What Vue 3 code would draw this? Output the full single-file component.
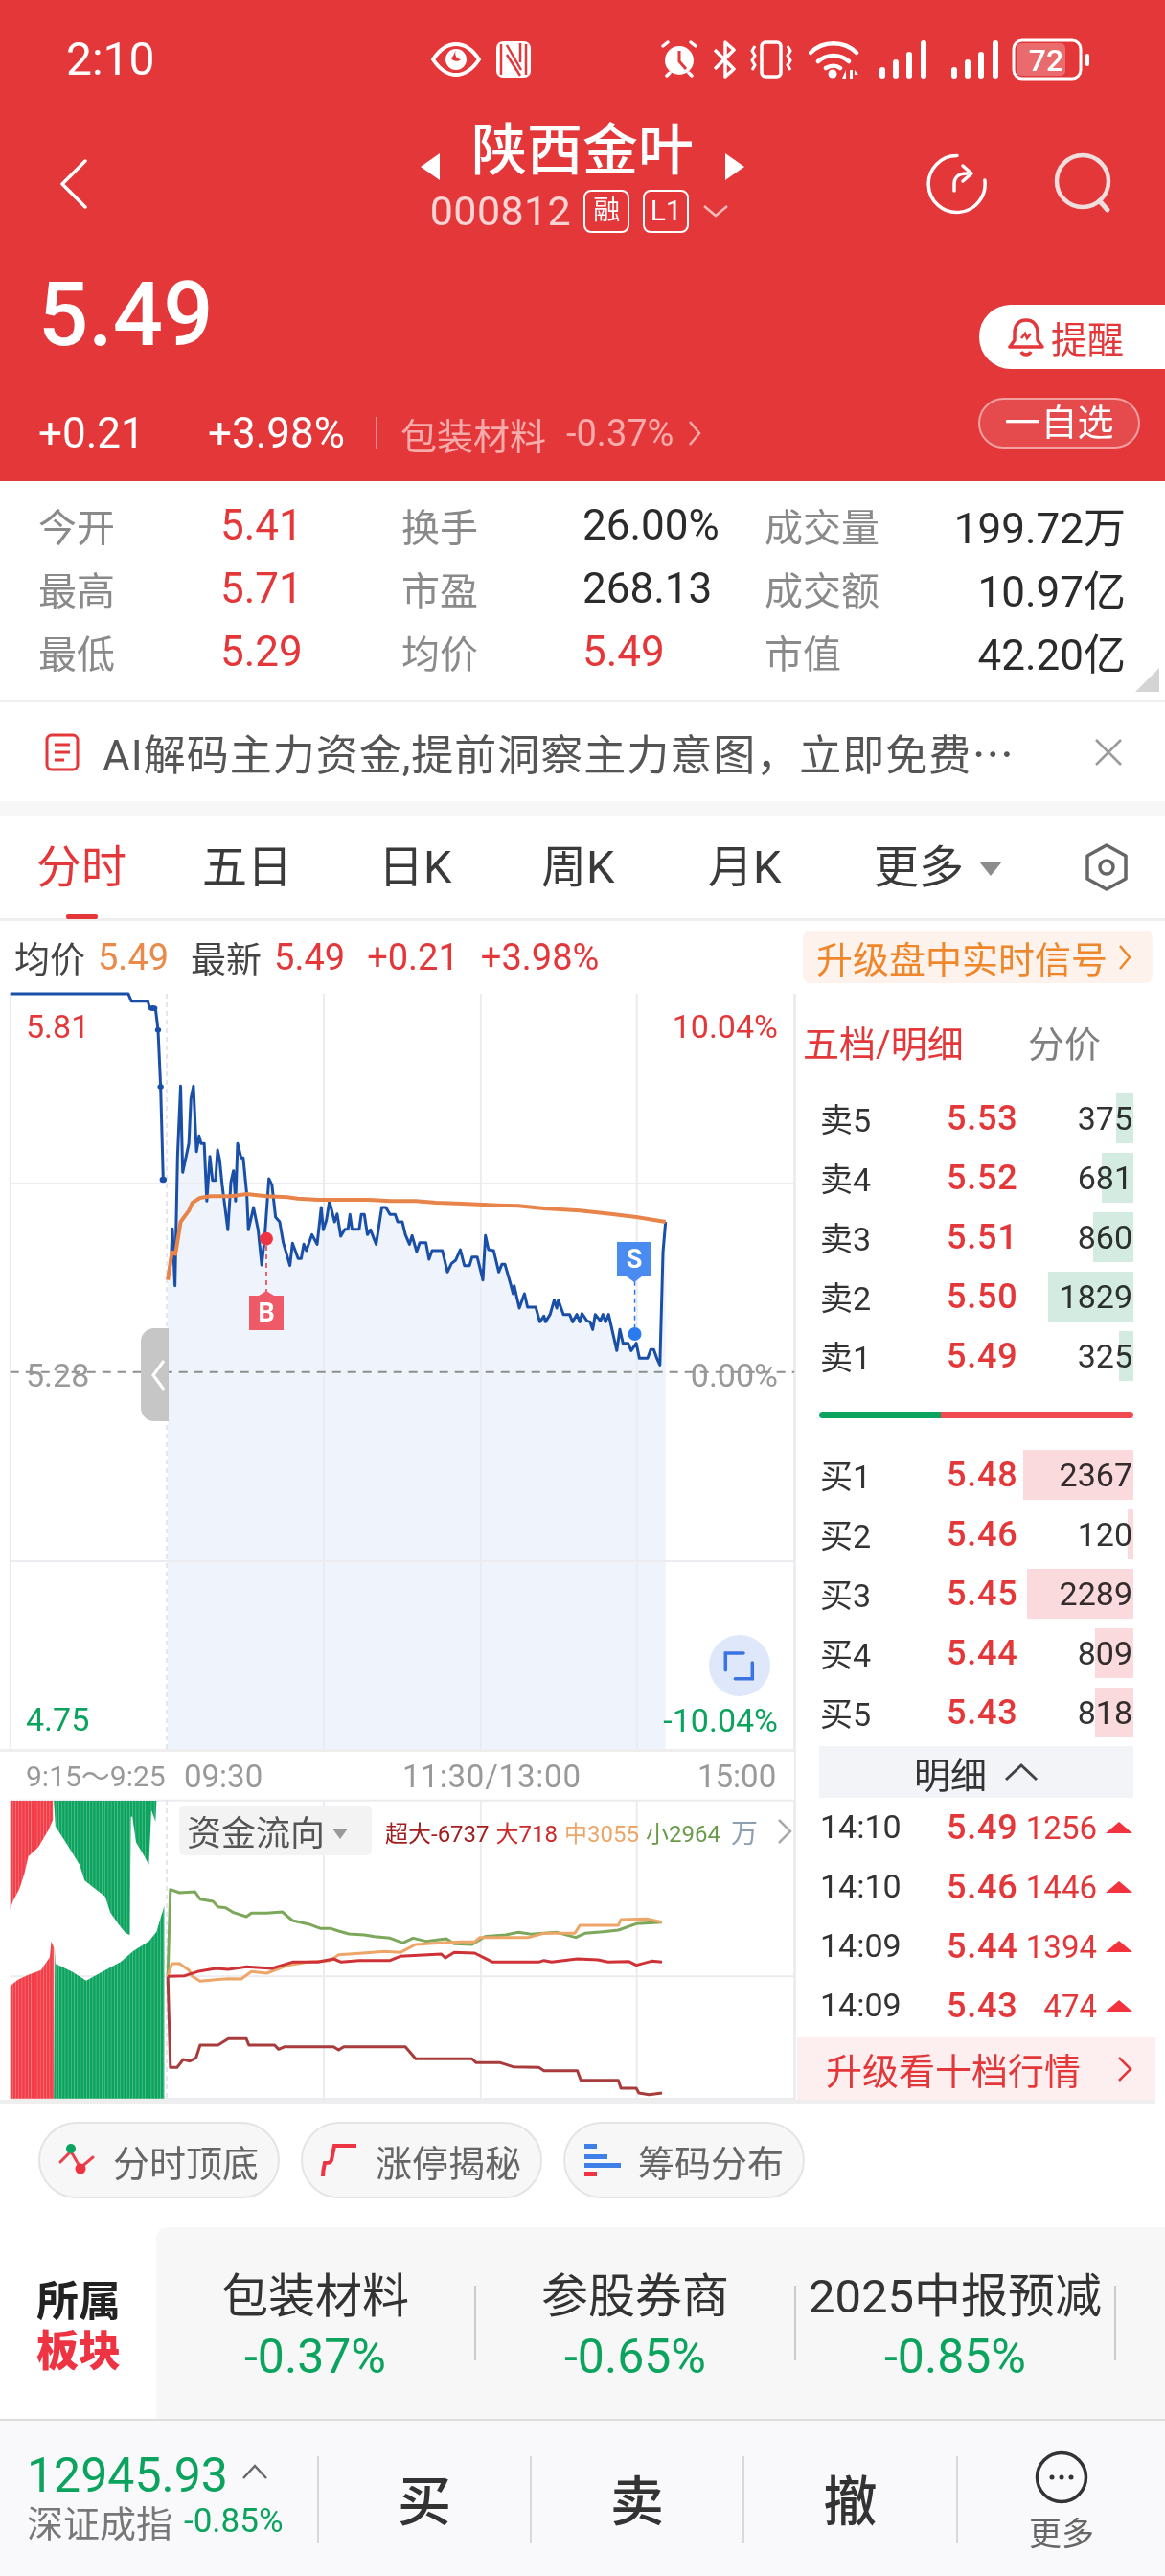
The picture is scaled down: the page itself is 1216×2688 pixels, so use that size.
<script setup>
const stats = [
  ['今开', '5.41', true, '换手', '26.00%', false, '成交量', '199.72万'],
  ['最高', '5.71', true, '市盈', '268.13', false, '成交额', '10.97亿'],
  ['最低', '5.29', true, '均价', '5.49', true, '市值', '42.20亿'],
]
const tabs = ['分时', '五日', '日K', '周K', '月K']
const sells = [
  ['卖5', '5.53', 375, 18],
  ['卖4', '5.52', 681, 33],
  ['卖3', '5.51', 860, 42],
  ['卖2', '5.50', 1829, 89],
  ['卖1', '5.49', 325, 15],
]
const buys = [
  ['买1', '5.48', 2367, 115],
  ['买2', '5.46', 120, 6],
  ['买3', '5.45', 2289, 111],
  ['买4', '5.44', 809, 40],
  ['买5', '5.43', 818, 40],
]
const details = [
  ['14:10', '5.49', 1256],
  ['14:10', '5.46', 1446],
  ['14:09', '5.44', 1394],
  ['14:09', '5.43', 474],
]
const plates = [
  ['包装材料', '-0.37%'],
  ['参股券商', '-0.65%'],
  ['2025中报预减', '-0.85%'],
]

// traced from the reference, coordinates are in the svg viewBox
const preLine = '20,-9 250,-9 256,14 288,14 292,36 303,36 308,104 313,282 318,573'
const priceLine = '334,800 336,727 341,905 346,500 352,280 356,550 368,460 372,320 377,280 383,485 388,436 392,460 398,460 403,640 409,500 414,575 420,575 424,480 428,510 433,590 444,730 450,580 455,545 459,640 463,460 470,505 474,505 481,620 484,730 494,660 503,730 510,840 516,750 524,570 530,590 537,690 545,705 552,770 565,842 570,772 581,820 587,820 592,775 597,795 608,745 618,775 626,660 630,730 636,700 642,640 652,705 657,680 664,750 672,728 678,728 682,682 686,728 700,728 704,682 710,682 716,745 722,730 733,775 744,660 752,660 760,682 770,682 775,705 784,705 790,745 798,775 803,748 812,798 818,770 830,770 836,822 842,795 862,795 872,862 880,835 888,825 897,792 905,842 915,842 920,815 930,815 941,887 946,748 952,792 962,795 972,862 978,838 984,838 995,900 1000,930 1002,905 1012,975 1022,930 1028,972 1044,972 1052,1018 1060,1000 1063,1018 1072,995 1080,950 1085,975 1088,950 1098,995 1110,995 1116,1018 1124,995 1130,1018 1134,992 1144,1015 1150,1018 1155,1042 1160,995 1170,1015 1175,995 1180,1018 1186,995 1202,1108 1208,1042 1214,1085 1224,1085 1230,1108 1240,1085 1246,1132 1262,1132 1268,1105 1274,1105 1280,1132 1286,1153 1292,800 1297,705'
const avgLine = '327,887 335,800 342,805 352,705 368,670 375,645 390,630 410,625 450,625 480,618 520,625 560,628 580,632 620,636 720,636 760,640 810,640 850,645 900,648 970,653 1010,655 1060,663 1130,670 1190,680 1240,690 1297,705'
const areaFill = '327,2355 327,887 ' + priceLine + ' 1297,2355'

const flowGreen = '327,790 332,518 350,528 380,525 390,548 415,555 425,572 440,575 455,590 480,603 490,592 520,592 550,588 570,615 605,628 625,640 645,640 660,648 680,657 710,660 730,665 760,670 785,685 805,670 830,680 870,672 885,688 920,690 945,665 985,660 1010,652 1035,658 1085,652 1122,668 1140,655 1175,650 1205,645 1240,625 1290,620'
const flowOrange = '327,790 335,750 350,750 368,770 375,790 390,805 420,800 445,797 470,798 490,775 520,780 560,755 600,745 645,740 660,722 700,718 750,712 780,715 810,690 860,685 900,682 925,682 935,668 990,668 1030,668 1060,655 1120,655 1130,630 1205,630 1210,612 1260,610 1290,620'
const flowRed = '327,790 360,788 385,775 420,765 445,768 480,760 530,765 570,745 620,745 650,735 665,745 700,740 760,740 780,727 860,720 868,732 885,715 925,717 960,745 1050,745 1060,740 1075,745 1125,735 1165,738 1185,745 1225,743 1240,755 1270,742 1290,745'
const flowBrown = '327,790 332,1075 345,1075 357,1050 370,1055 382,1045 390,1005 425,1005 445,985 480,985 485,1005 535,1005 543,1018 555,1010 650,1010 660,1020 670,1010 790,1010 810,1048 920,1048 928,1060 975,1060 1000,1073 1050,1075 1060,1085 1125,1085 1132,1115 1205,1115 1210,1140 1240,1140 1245,1155 1265,1160 1290,1155'
</script>

<template>
  <div class="page">
    <header class="head">
      <div class="status">
        <span class="clock">2:10</span>
        <svg class="st-eye" width="52" height="36" viewBox="0 0 52 36">
          <path d="M2 18C10 6 18 2 26 2s16 4 24 16c-8 12-16 16-24 16S10 30 2 18z" fill="none" stroke="#fff" stroke-width="4" />
          <circle cx="26" cy="18" r="11" fill="#fff" />
          <path d="M26 8c-2 5 0 9 5 10-3 3-8 2-10-1 2-2 3-5 5-9z" fill="#e3373a" />
        </svg>
        <svg class="st-nfc" width="36" height="38" viewBox="0 0 36 38">
          <rect x="0" y="0" width="36" height="38" rx="7" fill="#fff" />
          <path d="M5 3v32M11 4l15 26M11 14l14 22M25 2v20M31 3v32" fill="none" stroke="#e3373a" stroke-width="2.5" />
        </svg>
        <svg class="st-alarm" width="42" height="40" viewBox="0 0 42 40">
          <circle cx="21" cy="21" r="15" fill="#fff" />
          <path d="M21 11v11l7 8" fill="none" stroke="#e3373a" stroke-width="3" />
          <path d="M4 6l5-4M38 6l-5-4M8 37l3-3M34 37l-3-3" stroke="#fff" stroke-width="3.5" stroke-linecap="round" />
        </svg>
        <svg class="st-bt" width="24" height="40" viewBox="0 0 24 40">
          <path d="M2 10l20 20-9 8V2l9 8L2 30" fill="none" stroke="#fff" stroke-width="3.5" stroke-linejoin="round" />
        </svg>
        <svg class="st-vib" width="46" height="40" viewBox="0 0 46 40">
          <rect x="13" y="2" width="20" height="36" rx="4" fill="none" stroke="#fff" stroke-width="3.5" />
          <path d="M6 6l-3 5 3 5-3 5 3 5-3 5M40 6l3 5-3 5 3 5-3 5 3 5" fill="none" stroke="#fff" stroke-width="3" />
        </svg>
        <svg class="st-wifi" width="54" height="40" viewBox="0 0 54 40">
          <path d="M2 13C15 0 37 0 50 13M10 22c9-8 23-8 32 0M18 29c5-3 11-3 15 0" fill="none" stroke="#fff" stroke-width="4.5" stroke-linecap="round" />
          <circle cx="25" cy="35" r="4.5" fill="#fff" />
          <path d="M35 40l4-9v9zM43 31h3v9h-3zM48 31l4 5h-4z" fill="#fff" />
        </svg>
        <svg class="st-sig" width="50" height="40" viewBox="0 0 50 40">
          <rect x="0" y="28" width="6" height="12" rx="3" fill="#fff" />
          <rect x="14" y="20" width="6" height="20" rx="3" fill="#fff" />
          <rect x="28" y="12" width="6" height="28" rx="3" fill="#fff" />
          <rect x="43" y="0" width="6" height="40" rx="3" fill="#fff" />
        </svg>
        <svg class="st-sig2" width="50" height="40" viewBox="0 0 50 40">
          <rect x="0" y="28" width="6" height="12" rx="3" fill="#fff" />
          <rect x="14" y="20" width="6" height="20" rx="3" fill="#fff" />
          <rect x="28" y="12" width="6" height="28" rx="3" fill="#fff" />
          <rect x="43" y="0" width="6" height="40" rx="3" fill="#fff" />
        </svg>
        <svg class="st-bat" width="82" height="44" viewBox="0 0 82 44">
          <rect x="5" y="5" width="51" height="34" rx="5" fill="#ea6b6d" />
          <rect x="2" y="2" width="70" height="40" rx="9" fill="none" stroke="#fff" stroke-width="3" />
          <rect x="77" y="16" width="4" height="13" rx="2" fill="#fff" />
          <text x="36" y="34" text-anchor="middle" class="bat-text">72</text>
        </svg>
      </div>

      <div class="nav">
        <svg class="back" width="30" height="52" viewBox="0 0 30 52">
          <path d="M27 2L3 26l24 24" fill="none" stroke="#fff" stroke-width="3.5" stroke-linecap="round" stroke-linejoin="round" />
        </svg>
        <div class="nav-mid">
          <div class="name-row">
            <i class="tri-l"></i>
            <span class="name">陕西金叶</span>
            <i class="tri-r"></i>
          </div>
          <div class="code-row">
            <span class="code">000812</span>
            <span class="code-tag t-rong">融</span>
            <span class="code-tag">L1</span>
            <svg width="28" height="14" viewBox="0 0 28 14">
              <path d="M2 2l12 10L26 2" fill="none" stroke="#f5b9b9" stroke-width="2.5" />
            </svg>
          </div>
        </div>
        <div class="nav-right">
          <svg width="66" height="66" viewBox="0 0 66 66">
            <path d="M34 3.5A29.5 29.5 0 1 0 62 30" fill="none" stroke="#fff" stroke-width="3.5" stroke-linecap="round" transform="rotate(-2 33 33)" />
            <path d="M30 40v-7c0-7 5-11 13-11M39 14l9 8-9 8" fill="none" stroke="#fff" stroke-width="3.5" stroke-linecap="round" stroke-linejoin="round" />
          </svg>
          <svg width="62" height="64" viewBox="0 0 62 64">
            <circle cx="30" cy="30" r="27" fill="none" stroke="#eedede" stroke-width="4.5" />
            <path d="M48 51l8 9" stroke="#eedede" stroke-width="5" stroke-linecap="round" />
          </svg>
        </div>
      </div>

      <div class="quote">
        <div class="quote-left">
          <div class="price">5.49</div>
          <div class="change">
            <span class="chg-a">+0.21</span>
            <span class="chg-b">+3.98%</span>
            <span class="chg-sep"></span>
            <span class="chg-sector">包装材料</span>
            <span class="chg-pct">-0.37%</span>
            <svg width="14" height="28" viewBox="0 0 14 28">
              <path d="M2 2l10 12L2 26" fill="none" stroke="#f7abab" stroke-width="2.5" />
            </svg>
          </div>
        </div>
        <div class="quote-right">
          <div class="alert">
            <svg width="38" height="42" viewBox="0 0 38 42">
              <path d="M19 3c-8 0-12 6-12 13v8l-5 7h34l-5-7v-8c0-7-4-13-12-13z" fill="none" stroke="#e3373a" stroke-width="3.5" stroke-linejoin="round" />
              <path d="M14 22l4-5 2 5 4-5" fill="none" stroke="#e3373a" stroke-width="2.5" />
              <path d="M14 36c2 4 8 4 10 0" fill="none" stroke="#e3373a" stroke-width="3.5" />
            </svg>
            <span>提醒</span>
          </div>
          <div class="watch">一自选</div>
        </div>
      </div>
    </header>

    <section class="stats">
      <template v-for="row in stats" :key="row[0]">
        <span class="s-label">{{ row[0] }}</span>
        <span class="s-val" :class="{ red: row[2] }">{{ row[1] }}</span>
        <span class="s-label">{{ row[3] }}</span>
        <span class="s-val" :class="{ red: row[5] }">{{ row[4] }}</span>
        <span class="s-label">{{ row[6] }}</span>
        <span class="s-val s-right">{{ row[7] }}</span>
      </template>
      <i class="corner"></i>
    </section>

    <section class="ad">
      <svg width="36" height="40" viewBox="0 0 36 40">
        <rect x="2" y="2" width="32" height="36" rx="5" fill="none" stroke="#e3373a" stroke-width="3" />
        <path d="M10 12h16M10 20h16M10 28h10" stroke="#e3373a" stroke-width="3" />
      </svg>
      <span class="ad-text">AI解码主力资金,提前洞察主力意图，立即免费⋯</span>
      <svg class="ad-x" width="30" height="30" viewBox="0 0 30 30">
        <path d="M2 2l26 26M28 2L2 28" stroke="#9a9a9a" stroke-width="2.5" />
      </svg>
    </section>

    <nav class="tabs">
      <span v-for="(t, i) in tabs" :key="t" class="tab" :class="{ active: i === 0 }">{{ t }}</span>
      <span class="tab tab-more">更多<i class="more-tri"></i></span>
      <svg width="48" height="52" viewBox="0 0 48 52">
        <path d="M24 3l20 11v24L24 49 4 38V14z" fill="none" stroke="#666" stroke-width="3.5" stroke-linejoin="round" />
        <circle cx="24" cy="26" r="7" fill="none" stroke="#666" stroke-width="3.5" />
      </svg>
    </nav>

    <section class="info">
      <span class="i-text">均价</span>
      <span class="i-num orange">5.49</span>
      <span class="i-text i-gap">最新</span>
      <span class="i-num red">5.49</span>
      <span class="i-num red i-gap">+0.21</span>
      <span class="i-num red i-gap">+3.98%</span>
      <span class="upgrade-btn">升级盘中实时信号<svg width="14" height="28" viewBox="0 0 14 28"><path d="M2 2l10 12L2 26" fill="none" stroke="#f0862a" stroke-width="2.5" /></svg></span>
    </section>

    <main class="market">
      <div class="left">
        <div class="plot">
          <svg class="plot-svg" width="830" height="789" viewBox="0 -12 1549.6 2367" preserveAspectRatio="none">
            <polygon :points="areaFill" fill="#eef3fc" />
            <g class="grid">
              <path d="M20 -9V2355M631 -9V2355M937 -9V2355M1241 -9V2355M1548 -9V2355M20 585H1548M20 1767H1548" />
            </g>
            <path class="open-line" d="M325 -9V2355" />
            <path class="base-line" d="M20 1175H1548" />
            <polyline class="line-pre" :points="preLine" />
            <polyline class="line-price" :points="priceLine" />
            <polyline class="line-avg" :points="avgLine" />
            <ellipse cx="298" cy="36" rx="9" ry="9" fill="#1a4fa8" />
            <ellipse cx="308" cy="104" rx="6" ry="8" fill="#1a4fa8" />
            <ellipse cx="313" cy="282" rx="6" ry="8" fill="#1a4fa8" />
            <ellipse cx="318" cy="573" rx="7" ry="10" fill="#1a4fa8" />
            <path class="mark-b" d="M519 780V925" />
            <path class="mark-s" d="M1237 890V1040" />
            <ellipse cx="519" cy="758" rx="13" ry="21" fill="#ee3342" />
            <ellipse cx="1237" cy="1056" rx="13" ry="21" fill="#2a7bef" />
          </svg>
          <span class="lbl l-high">5.81</span>
          <span class="lbl r-high">10.04%</span>
          <span class="lbl l-mid">5.28</span>
          <span class="lbl r-mid">0.00%</span>
          <span class="lbl l-low">4.75</span>
          <span class="lbl r-low">-10.04%</span>
          <span class="tag tag-b">B</span>
          <span class="tag tag-s">S</span>
          <div class="handle">
            <svg width="16" height="34" viewBox="0 0 16 34">
              <path d="M14 2L3 17l11 15" fill="none" stroke="#fff" stroke-width="3" />
            </svg>
          </div>
          <div class="expand">
            <svg width="64" height="64" viewBox="0 0 64 64">
              <path d="M17.3 36.7V19H36M27.3 45.7H45.3V29" fill="none" stroke="#3b74e0" stroke-width="3.5" stroke-linecap="round" />
            </svg>
          </div>
        </div>

        <div class="axis">
          <span class="ax-pre">9:15～9:25</span>
          <span class="ax-open">09:30</span>
          <span class="ax-mid">11:30/13:00</span>
          <span class="ax-end">15:00</span>
        </div>

        <div class="flow">
          <svg class="plot-svg" width="830" height="312" viewBox="0 237 1549.6 936" preserveAspectRatio="none">
            <defs>
              <pattern id="stripes" width="6" height="10" patternUnits="userSpaceOnUse">
                <rect x="0" y="0" width="1.6" height="10" fill="#fff" fill-opacity="0.28" />
              </pattern>
            </defs>
            <g class="grid">
              <path d="M631 237V1173M937 237V1173M1241 237V1173M1548 237V1173M20 790H1548M20 239H1548M20 1173H1548" />
            </g>
            <path class="open-line" d="M325 237V1173" />
            <polygon points="20,240 103,240 103,300 95,330 75,385 55,415 48,465 38,515 25,555 20,580" fill="#f23c47" />
            <polygon points="105,240 305,240 303,305 295,270 290,440 280,410 265,370 258,290 255,290 253,660 245,655 230,625 215,590 205,540 185,515 165,490 155,440 130,375 108,320" fill="#0ba35e" />
            <polygon points="20,1172 105,1172 105,700 100,680 97,730 80,770 55,785 35,800 20,820" fill="#f23c47" />
            <polygon points="105,1172 320,1172 320,570 305,650 290,680 260,710 235,745 200,775 168,803 140,775 108,750 107,700" fill="#0ba35e" />
            <polygon points="20,240 103,240 103,300 95,330 75,385 55,415 48,465 38,515 25,555 20,580" fill="url(#stripes)" />
            <polygon points="105,240 305,240 303,305 295,270 290,440 280,410 265,370 258,290 255,290 253,660 245,655 230,625 215,590 205,540 185,515 165,490 155,440 130,375 108,320" fill="url(#stripes)" />
            <polygon points="20,1172 105,1172 105,700 100,680 97,730 80,770 55,785 35,800 20,820" fill="url(#stripes)" />
            <polygon points="105,1172 320,1172 320,570 305,650 290,680 260,710 235,745 200,775 168,803 140,775 108,750 107,700" fill="url(#stripes)" />
            <polyline class="fl" stroke="#7da75a" :points="flowGreen" />
            <polyline class="fl" stroke="#eda667" :points="flowOrange" />
            <polyline class="fl" stroke="#cf3236" :points="flowRed" />
            <polyline class="fl" stroke="#a83c3c" :points="flowBrown" />
          </svg>
          <div class="flow-select">资金流向<i class="more-tri small"></i></div>
          <div class="flow-legend">
            <span class="c-brown">超大-6737</span>
            <span class="c-red">大718</span>
            <span class="c-orange">中3055</span>
            <span class="c-green">小2964</span>
            <span class="c-unit">万</span>
            <svg width="16" height="28" viewBox="0 0 16 28">
              <path d="M2 2l12 12L2 26" fill="none" stroke="#aaa" stroke-width="2.5" />
            </svg>
          </div>
        </div>
      </div>

      <aside class="book">
        <div class="book-head">
          <span class="bh-red">五档/明细</span>
          <span class="bh-gray">分价</span>
        </div>
        <div v-for="r in sells" :key="r[0]" class="row">
          <i class="depth green" :style="{ width: r[3] + 'px' }"></i>
          <span class="r-name">{{ r[0] }}</span>
          <span class="r-price">{{ r[1] }}</span>
          <span class="r-vol">{{ r[2] }}</span>
        </div>
        <div class="ratio"><i class="ratio-g"></i><i class="ratio-r"></i></div>
        <div v-for="r in buys" :key="r[0]" class="row">
          <i class="depth pink" :style="{ width: r[3] + 'px' }"></i>
          <span class="r-name">{{ r[0] }}</span>
          <span class="r-price">{{ r[1] }}</span>
          <span class="r-vol">{{ r[2] }}</span>
        </div>
        <div class="detail-bar">
          <span>明细</span>
          <svg width="36" height="20" viewBox="0 0 36 20">
            <path d="M2 18L18 3l16 15" fill="none" stroke="#444" stroke-width="3" />
          </svg>
        </div>
        <div v-for="(d, i) in details" :key="i" class="row detail">
          <span class="r-name">{{ d[0] }}</span>
          <span class="r-price">{{ d[1] }}</span>
          <span class="d-vol">{{ d[2] }}</span>
          <i class="up"></i>
        </div>
        <div class="ten">
          <span>升级看十档行情</span>
          <svg width="16" height="28" viewBox="0 0 16 28">
            <path d="M2 2l12 12L2 26" fill="none" stroke="#e3373a" stroke-width="2.5" />
          </svg>
        </div>
      </aside>
    </main>

    <section class="chips">
      <div class="chip">
        <svg width="42" height="36" viewBox="0 0 42 36">
          <path d="M3 20l11-11 10 17 13-11" fill="none" stroke="#e9434f" stroke-width="3" stroke-linecap="round" />
          <circle cx="14" cy="6" r="5" fill="#0ba35e" />
          <circle cx="24" cy="27" r="5.5" fill="#ee3342" />
        </svg>
        <span>分时顶底</span>
      </div>
      <div class="chip">
        <svg width="42" height="38" viewBox="0 0 42 38">
          <path d="M3 36c0-6 1-10 2-14 4 0 6 0 7-3l3-15h23" fill="none" stroke="#ee3342" stroke-width="4" />
        </svg>
        <span>涨停揭秘</span>
      </div>
      <div class="chip">
        <svg width="42" height="36" viewBox="0 0 42 36">
          <rect x="2" y="1" width="13" height="5" fill="#3f7fe8" />
          <rect x="2" y="12" width="24" height="5" fill="#3f7fe8" />
          <rect x="2" y="21" width="38" height="5" fill="#3f7fe8" />
          <rect x="2" y="30" width="13" height="5" fill="#ee3342" />
        </svg>
        <span>筹码分布</span>
      </div>
    </section>

    <section class="plates">
      <div class="plates-title">所属<b>板块</b></div>
      <div class="plates-box">
        <div v-for="p in plates" :key="p[0]" class="plate">
          <span class="p-name">{{ p[0] }}</span>
          <span class="p-pct">{{ p[1] }}</span>
        </div>
        <span class="p-next">面</span>
      </div>
    </section>

    <footer class="foot">
      <div class="index">
        <div class="idx-top">
          <span class="idx-num">12945.93</span>
          <svg width="28" height="18" viewBox="0 0 28 18">
            <path d="M2 16L14 3l12 13" fill="none" stroke="#666" stroke-width="2.5" />
          </svg>
        </div>
        <div class="idx-sub"><span>深证成指</span><b>-0.85%</b></div>
      </div>
      <div class="act">买</div>
      <div class="act">卖</div>
      <div class="act">撤</div>
      <div class="act more">
        <svg width="56" height="56" viewBox="0 0 56 56">
          <circle cx="28" cy="28" r="25.5" fill="none" stroke="#333" stroke-width="3.5" />
          <circle cx="18" cy="28" r="2.5" fill="#333" />
          <circle cx="28" cy="28" r="2.5" fill="#333" />
          <circle cx="38" cy="28" r="2.5" fill="#333" />
        </svg>
        <span>更多</span>
      </div>
    </footer>
  </div>
</template>

<style>
html, body { background: #fff; }
</style>

<style scoped>
* { box-sizing: border-box; }
i { display: block; font-style: normal; }
.page {
  width: 1216px;
  height: 2688px;
  overflow: hidden;
  font-family: Roboto, "Noto Sans CJK SC", sans-serif;
  color: #333;
  background: #fff;
}

/* header */
.head { height: 502px; background: #e3373a; color: #fff; }
.status { height: 120px; display: flex; align-items: center; padding-left: 69px; padding-top: 4px; }
.clock { font-size: 48px; width: 381px; line-height: 1; }
.st-nfc { margin-left: 16px; }
.st-alarm { margin-left: 134px; }
.st-bt { margin-left: 14px; }
.st-vib { margin-left: 14px; }
.st-wifi { margin-left: 16px; }
.st-sig { margin-left: 20px; }
.st-sig2 { margin-left: 25px; }
.st-bat { margin-left: 13px; }
.bat-text { font: 500 32px Roboto, sans-serif; fill: #fff; }

.nav { height: 130px; display: grid; grid-template-columns: 1fr auto 1fr; align-items: start; }
.back { margin: 46px 0 0 62px; }
.nav-mid { display: flex; flex-direction: column; align-items: center; }
.name-row { display: flex; align-items: center; height: 66px; margin-top: 4px; }
.name { font-size: 58px; line-height: 66px; font-weight: 500; margin: 0 33px; }
.tri-l, .tri-r {
  width: 0;
  height: 0;
  align-self: flex-end;
  margin-bottom: 2px;
  border-top: 14px solid transparent;
  border-bottom: 14px solid transparent;
}
.tri-l { border-right: 20px solid #fff; }
.tri-r { border-left: 20px solid #fff; }
.code-row { display: flex; align-items: center; height: 48px; margin: 6px 6px 0 0; }
.code { font-size: 43px; color: #fbd3d3; margin-right: 13px; line-height: 48px; letter-spacing: 0.4px; }
.code-tag {
  width: 48px;
  height: 45px;
  border: 2px solid #fff;
  border-radius: 8px;
  display: flex;
  align-items: center;
  justify-content: center;
  font-size: 30px;
  margin-right: 14px;
  line-height: 1;
}
.t-rong { font-size: 28px; }
.nav-right { display: flex; justify-content: flex-end; gap: 68px; padding: 39px 54px 0 0; }

.quote { height: 252px; display: flex; justify-content: space-between; }
.quote-left { padding-left: 40px; }
.price { font-size: 92px; font-weight: 500; line-height: 100px; margin: 29px 0 0 0; }
.change { display: flex; align-items: center; height: 50px; margin-top: 48px; }
.chg-a { font-size: 44px; width: 177px; }
.chg-b { font-size: 44px; width: 175px; }
.chg-sep { width: 2px; height: 34px; background: #f08b8c; margin-right: 24px; }
.chg-sector { font-size: 38px; color: #f7abab; width: 173px; }
.chg-pct { font-size: 38px; color: #f7abab; width: 127px; }
.quote-right { display: flex; flex-direction: column; align-items: flex-end; }
.alert {
  width: 194px;
  height: 67px;
  margin-top: 68px;
  background: #fff;
  border-radius: 33px 0 0 33px;
  display: flex;
  align-items: center;
  padding-left: 30px;
  gap: 7px;
  color: #e3373a;
  font-size: 38px;
}
.watch {
  width: 169px;
  height: 53px;
  margin: 30px 26px 0 0;
  border: 2px solid #f3a0a1;
  border-radius: 27px;
  background: #e54a4d;
  font-size: 38px;
  line-height: 48px;
  text-align: center;
}

/* stats */
.stats {
  position: relative;
  height: 231px;
  padding: 13px 41px 0 40px;
  display: grid;
  grid-template-columns: 190px 189px 189px 190px 130px 1fr;
  grid-auto-rows: 66px;
  align-items: center;
  border-bottom: 3px solid #f0f0f0;
}
.s-label { font-size: 40px; color: #8a8a8a; }
.s-val { font-size: 44px; color: #2b2b2b; }
.s-val.red { color: #e3373a; }
.s-right { text-align: right; }
.corner {
  position: absolute;
  right: 6px;
  bottom: 8px;
  width: 0;
  height: 0;
  border-left: 25px solid transparent;
  border-bottom: 25px solid #d4d4d4;
}

.ad {
  height: 119px;
  display: flex;
  align-items: center;
  padding: 0 44px 0 47px;
  border-bottom: 16px solid #f7f7f7;
}
.ad-text { font-size: 44px; letter-spacing: 1px; color: #555; margin-left: 24px; flex: 1; white-space: nowrap; }
.tabs {
  height: 109px;
  border-bottom: 3px solid #eee;
  padding-left: 38px;
  display: grid;
  grid-template-columns: 173px 184px 170px 174px 173px 219px 48px;
  align-items: center;
}
.tab { font-size: 47px; color: #3a3a3a; position: relative; line-height: 1; margin-top: -2px; }
.tab.active { color: #e3373a; }
.tab.active::after {
  content: "";
  position: absolute;
  left: 31px;
  top: 73px;
  width: 33px;
  height: 5px;
  border-radius: 2px;
  background: #e3373a;
}
.tab-more { display: flex; align-items: center; }
.more-tri {
  width: 0;
  height: 0;
  margin: 4px 0 0 16px;
  border-left: 12px solid transparent;
  border-right: 12px solid transparent;
  border-top: 15px solid #8c8c8c;
}
.more-tri.small { margin: 6px 0 0 8px; border-width: 11px 8px 0; border-top-color: #999; }

.info { height: 75px; display: flex; align-items: center; padding-left: 15px; }
.i-text { font-size: 37px; color: #444; }
.i-num { font-size: 38px; margin-left: 13px; }
.i-gap { margin-left: 23px; }
.orange { color: #e98a4a; }
.red { color: #e3373a; }
.upgrade-btn {
  width: 365px;
  height: 55px;
  margin: 0 13px 0 auto;
  border-radius: 8px;
  background: #fef3ec;
  color: #f0862a;
  font-size: 38px;
  display: flex;
  align-items: center;
  padding-left: 14px;
  gap: 11px;
  white-space: nowrap;
}

/* chart */
.market { height: 1159px; display: flex; border-bottom: 4px solid #eee; width: 1206px; }
.left { width: 829px; flex: none; }
.plot { position: relative; height: 789px; }
.plot-svg { position: absolute; left: 0; top: 0; overflow: visible; }
.grid path { fill: none; stroke: #ececf0; stroke-width: 2px; vector-effect: non-scaling-stroke; }
.open-line { fill: none; stroke: #e4e6ea; stroke-width: 2px; stroke-dasharray: 5 4; vector-effect: non-scaling-stroke; }
.base-line { fill: none; stroke: #8e8e8e; stroke-width: 2px; stroke-dasharray: 9 7; vector-effect: non-scaling-stroke; }
.line-pre, .line-price, .line-avg { fill: none; vector-effect: non-scaling-stroke; stroke-linejoin: round; }
.line-pre { stroke: #1a4fa8; stroke-width: 3px; }
.line-price { stroke: #1a4fa8; stroke-width: 3px; }
.line-avg { stroke: #e8834a; stroke-width: 4px; }
.mark-b, .mark-s { fill: none; stroke-width: 1.5px; stroke-dasharray: 5 4; vector-effect: non-scaling-stroke; }
.mark-b { stroke: #ee3342; }
.mark-s { stroke: #2a7bef; }

.lbl { position: absolute; font-size: 34px; line-height: 40px; }
.l-high { left: 27px; top: 15px; color: #e3373a; }
.r-high { right: 17px; top: 15px; color: #e3373a; }
.l-mid { left: 27px; top: 379px; color: #999; }
.r-mid { right: 17px; top: 379px; color: #999; }
.l-low { left: 27px; top: 738px; color: #0ba35e; }
.r-low { right: 17px; top: 739px; color: #0ba35e; }

.tag {
  position: absolute;
  color: #fff;
  font: 700 27px/36px Roboto, sans-serif;
  text-align: center;
  width: 36px;
  height: 36px;
}
.tag::after { content: ""; position: absolute; left: 10px; width: 0; height: 0; border-left: 8px solid transparent; border-right: 8px solid transparent; }
.tag-b { left: 260px; top: 316px; background: #ef5a68; }
.tag-b::after { top: -5px; border-bottom: 5px solid #ef5a68; }
.tag-s { left: 644px; top: 260px; background: #4a8bf0; }
.tag-s::after { top: 36px; border-top: 6px solid #4a8bf0; }

.handle {
  position: absolute;
  left: 147px;
  top: 350px;
  width: 29px;
  height: 97px;
  border-radius: 14px 0 0 14px;
  background: #c6c6c6;
  display: flex;
  align-items: center;
  justify-content: center;
  padding-left: 6px;
}
.expand {
  position: absolute;
  left: 740px;
  top: 670px;
  width: 64px;
  height: 64px;
  border-radius: 50%;
  background: #dfe8fb;
}

.axis { position: relative; height: 53px; border-top: 3px solid #eee; font-size: 33px; color: #999; }
.axis span { position: absolute; top: 4px; line-height: 44px; white-space: nowrap; }
.ax-pre { left: 27px; font-size: 30px; }
.ax-open { left: 192px; }
.ax-mid { left: 420px; letter-spacing: 0.8px; }
.ax-end { left: 728px; }

.flow { position: relative; height: 317px; }
.fl { fill: none; stroke-width: 3px; vector-effect: non-scaling-stroke; stroke-linejoin: round; }
.flow-select {
  position: absolute;
  left: 187px;
  top: 6px;
  width: 201px;
  height: 52px;
  border-radius: 6px;
  background: #f3f3f3;
  color: #555;
  font-size: 36px;
  display: flex;
  align-items: center;
  padding-left: 8px;
}
.flow-legend {
  position: absolute;
  left: 402px;
  top: 15px;
  display: flex;
  align-items: center;
  height: 36px;
  gap: 7px;
  font-size: 24px;
  white-space: nowrap;
}
.flow-legend svg { margin-left: 13px; }
.c-brown { color: #a01f1f; }
.c-red { color: #cc2a2a; }
.c-orange { color: #eda667; }
.c-green { color: #6a9b4a; }
.c-unit { color: #8e9fb0; font-size: 28px; margin-left: 4px; }

/* order book */
.book { flex: 1; border-left: 2px solid #eee; padding-left: 1px; margin-top: 1px; }
.book-head { height: 99px; padding: 0 0 0 6px; display: flex; align-items: center; }
.bh-red { font-size: 38px; color: #e3373a; width: 235px; white-space: nowrap; }
.bh-gray { font-size: 38px; color: #808080; }
.row {
  position: relative;
  width: 328px;
  height: 62px;
  margin-left: 23px;
  padding-left: 1px;
  display: grid;
  grid-template-columns: 132px 1fr auto;
  align-items: center;
}
.depth { position: absolute; right: 0; top: 5px; height: 52px; }
.depth.green { background: #d3ebe0; }
.depth.pink { background: #fbdadd; }
.r-name { font-size: 34px; color: #333; position: relative; top: -1px; }
.r-price { font-size: 36px; font-weight: 500; color: #e3373a; letter-spacing: 0.8px; position: relative; }
.r-vol { font-size: 34px; color: #333; padding-right: 1px; position: relative; mix-blend-mode: multiply; }
.ratio { width: 328px; height: 7px; margin: 27px 0 28px 23px; display: flex; border-radius: 4px; overflow: hidden; }
.ratio-g { width: 127px; background: #0ba35e; }
.ratio-r { flex: 1; background: #f04b51; }
.detail-bar {
  width: 328px;
  height: 54px;
  margin: 4px 0 0 23px;
  background: #f3f4f8;
  display: flex;
  align-items: center;
  justify-content: center;
  gap: 18px;
  font-size: 38px;
  color: #333;
}
.detail { grid-template-columns: 132px 74px 1fr 38px; height: 62px; }
.d-vol { font-size: 33px; color: #e3373a; text-align: right; }
.up {
  justify-self: end;
  width: 0;
  height: 0;
  margin-right: 1px;
  border-left: 14px solid transparent;
  border-right: 14px solid transparent;
  border-bottom: 12px solid #f2323c;
}
.ten {
  height: 65px;
  margin-top: 2px;
  width: 374px;
  background: #fdeff0;
  color: #e3373a;
  font-size: 38px;
  display: flex;
  align-items: center;
  justify-content: space-between;
  padding: 0 24px 0 30px;
}

/* chips */
.chips { height: 129px; padding: 19px 0 0 40px; display: flex; gap: 22px; }
.chip {
  width: 252px;
  height: 80px;
  border: 2px solid #e4e4e4;
  border-radius: 40px;
  background: #f7f7f7;
  display: flex;
  align-items: center;
  padding-left: 18px;
  gap: 16px;
  font-size: 38px;
  color: #666;
  white-space: nowrap;
}

/* plates */
.plates { height: 200px; display: flex; }
.plates-title {
  width: 163px;
  padding: 52px 0 0 38px;
  font-size: 44px;
  font-weight: 700;
  line-height: 52px;
  color: #222;
}
.plates-title b { display: block; color: #ee3342; }
.plates-box {
  flex: 1;
  position: relative;
  overflow: hidden;
  background: #f7f7f7;
  border-radius: 12px 0 0 0;
  display: flex;
  align-items: center;
}
.plate {
  width: 334px;
  height: 78px;
  flex: none;
  border-right: 2px solid #ccc;
  position: relative;
}
.p-name, .p-pct { position: absolute; left: -20px; right: -20px; text-align: center; white-space: nowrap; }
.p-name { top: -18px; font-size: 49px; line-height: 60px; color: #333; }
.p-pct { top: 44px; font-size: 50px; line-height: 60px; color: #0ba35e; }
.p-next { margin: -40px 0 0 49px; font-size: 49px; color: #333; white-space: nowrap; }

/* footer */
.foot {
  height: 164px;
  border-top: 2px solid #ddd;
  background: #f9f9fb;
  display: grid;
  grid-template-columns: 331px 222px 222px 223px 218px;
  padding-top: 37px;
}
.index { padding-left: 28px; margin-top: -3px; }
.idx-top { display: flex; align-items: center; height: 46px; gap: 14px; }
.idx-top svg { margin-top: -8px; }
.idx-num { font-size: 50px; color: #0ba35e; line-height: 46px; }
.idx-sub { display: flex; align-items: center; height: 44px; margin-top: 2px; font-size: 38px; color: #777; }
.idx-sub b { font-size: 35px; font-weight: 400; color: #0ba35e; margin-left: 12px; }
.act {
  height: 91px;
  border-left: 2px solid #d9d9d9;
  display: flex;
  align-items: center;
  justify-content: center;
  font-size: 56px;
  font-weight: 500;
  color: #333;
  padding-bottom: 6px;
}
.act.more {
  flex-direction: column;
  justify-content: flex-start;
  font-size: 34px;
  font-weight: 400;
  color: #666;
  gap: 4px;
  padding-bottom: 0;
}
.act.more svg { flex: none; margin-top: -6px; }
</style>
